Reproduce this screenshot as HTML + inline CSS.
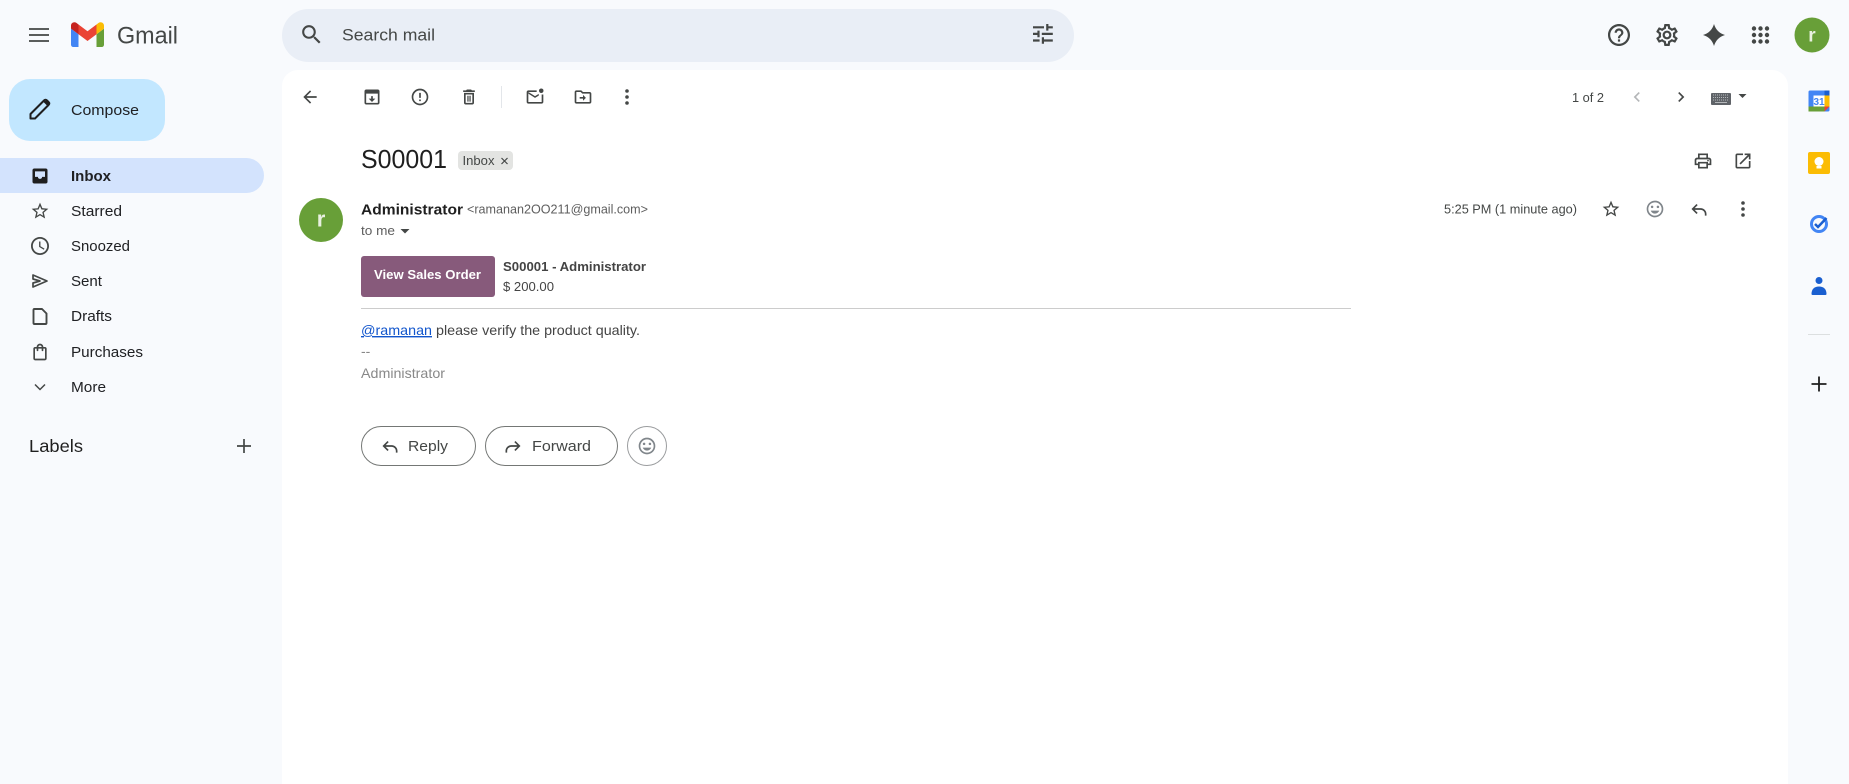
<!DOCTYPE html>
<html lang="en">
<head>
<meta charset="utf-8">
<title>S00001 - Gmail</title>
<style>
html,body{margin:0;padding:0;width:1849px;height:784px;overflow:hidden;background:#f8fafd}
svg{display:block}
text{font-family:"Liberation Sans",Arial,sans-serif;fill:#1f1f1f;white-space:pre}
.n{font-size:15px;fill:#202124}
.i{fill:#444746}
.s{font-size:13px;fill:#5e5e5e}
.m{font-size:14px;fill:#444}
</style>
</head>
<body>
<svg width="1849" height="784" viewBox="0 0 1849 784" xmlns="http://www.w3.org/2000/svg">
<rect width="1849" height="784" fill="#f8fafd"/>
<!-- main panel -->
<path d="M298 70H1772a16 16 0 0 1 16 16V784H282V86a16 16 0 0 1 16-16z" fill="#fff"/>
<!-- search -->
<rect x="282" y="9" width="792" height="53" rx="26.5" fill="#e9eef6"/>
<!-- top left -->
<path d="M29 29h20M29 35h20M29 41h20" stroke="#444746" stroke-width="1.8" fill="none"/>
<g transform="translate(71,23) scale(.375)">
<path fill="#4285f4" d="M6 64h14V30L0 15v43c0 3.32 2.69 6 6 6"/>
<path fill="#689f38" d="M68 64h14c3.32 0 6-2.69 6-6V15L68 30"/>
<path fill="#fbbc04" d="M68 4v26l20-15V7c0-7.42-8.47-11.65-14.4-7.2"/>
<path fill="#ea4335" d="M20 30V4l24 18 24-18v26L44 48"/>
<path fill="#c5221f" d="M0 7v8l20 15V4L14.4-.2C8.46-4.65 0-.42 0 7"/>
</g>
<text x="117" y="43.500" font-size="24" textLength="61" lengthAdjust="spacingAndGlyphs" style="fill:#444746">Gmail</text>
<!-- search contents -->
<g transform="translate(299,22) scale(1.05)" class="i"><path d="M15.5 14h-.79l-.28-.27C15.41 12.59 16 11.11 16 9.5 16 5.91 13.09 3 9.5 3S3 5.91 3 9.5 5.91 16 9.5 16c1.61 0 3.09-.59 4.23-1.57l.27.28v.79l5 4.99L20.49 19l-4.99-5zm-6 0C7.01 14 5 11.99 5 9.5S7.01 5 9.5 5 14 7.01 14 9.5 11.99 14 9.5 14z"/></g>
<text x="342" y="40.500" font-size="17" textLength="93" lengthAdjust="spacingAndGlyphs" style="fill:#444746">Search mail</text>
<g transform="translate(1029.700,20.700) scale(1.1)" class="i"><path d="M3 17v2h6v-2H3zM3 5v2h10V5H3zm10 16v-2h8v-2h-8v-2h-2v6h2zM7 9v2H3v2h4v2h2V9H7zm14 4v-2H11v2h10zm-6-4h2V7h4V5h-4V3h-2v6z"/></g>
<!-- top right -->
<g transform="translate(1605.800,21.800) scale(1.1)" class="i"><path d="M11 18h2v-2h-2v2zm1-16C6.48 2 2 6.48 2 12s4.48 10 10 10 10-4.48 10-10S17.52 2 12 2zm0 18c-4.41 0-8-3.59-8-8s3.59-8 8-8 8 3.58 8 8-3.59 8-8 8zm0-14c-2.21 0-4 1.79-4 4h2c0-1.1.9-2 2-2s2 .9 2 2c0 2-3 1.75-3 5h2c0-2.25 3-2.5 3-5 0-2.21-1.79-4-4-4z"/></g>
<g transform="translate(1653.800,21.800) scale(1.1)" class="i"><path d="M19.43 12.98c.04-.32.07-.64.07-.98 0-.34-.03-.66-.07-.98l2.11-1.65c.19-.15.24-.42.12-.64l-2-3.46c-.09-.16-.26-.25-.44-.25-.06 0-.12.01-.17.03l-2.49 1c-.52-.4-1.08-.73-1.69-.98l-.38-2.65C14.46 2.18 14.25 2 14 2h-4c-.25 0-.46.18-.49.42l-.38 2.65c-.61.25-1.17.59-1.69.98l-2.49-1c-.06-.02-.12-.03-.18-.03-.17 0-.34.09-.43.25l-2 3.46c-.13.22-.07.49.12.64l2.11 1.65c-.04.32-.07.65-.07.98 0 .33.03.66.07.98l-2.11 1.65c-.19.15-.24.42-.12.64l2 3.46c.09.16.26.25.44.25.06 0 .12-.01.17-.03l2.49-1c.52.4 1.08.73 1.69.98l.38 2.65c.03.24.24.42.49.42h4c.25 0 .46-.18.49-.42l.38-2.65c.61-.25 1.17-.59 1.69-.98l2.49 1c.06.02.12.03.18.03.17 0 .34-.09.43-.25l2-3.46c.12-.22.07-.49-.12-.64l-2.11-1.65zm-1.98-1.71c.04.31.05.52.05.73 0 .21-.02.43-.05.73l-.14 1.13.89.7 1.08.84-.7 1.21-1.27-.51-1.04-.42-.9.68c-.43.32-.84.56-1.25.73l-1.06.43-.16 1.13-.2 1.35h-1.4l-.19-1.35-.16-1.13-1.06-.43c-.43-.18-.83-.41-1.23-.71l-.91-.7-1.06.43-1.27.51-.7-1.21 1.08-.84.89-.7-.14-1.13c-.03-.31-.05-.54-.05-.74s.02-.43.05-.73l.14-1.13-.89-.7-1.08-.84.7-1.21 1.27.51 1.04.42.9-.68c.43-.32.84-.56 1.25-.73l1.06-.43.16-1.13.2-1.35h1.39l.19 1.35.16 1.13 1.06.43c.43.18.83.41 1.23.71l.91.7 1.06-.43 1.27-.51.7 1.21-1.07.85-.89.7.14 1.13zM12 8c-2.21 0-4 1.79-4 4s1.79 4 4 4 4-1.79 4-4-1.79-4-4-4zm0 6c-1.1 0-2-.9-2-2s.9-2 2-2 2 .9 2 2-.9 2-2 2z"/></g>
<path class="i" d="M1714 24Q1716.500 32.500 1725 35Q1716.500 37.500 1714 46Q1711.500 37.500 1703 35Q1711.500 32.500 1714 24z"/>
<g class="i">
<circle cx="1754" cy="28.500" r="2.200"/><circle cx="1760.500" cy="28.500" r="2.200"/><circle cx="1767" cy="28.500" r="2.200"/>
<circle cx="1754" cy="35" r="2.200"/><circle cx="1760.500" cy="35" r="2.200"/><circle cx="1767" cy="35" r="2.200"/>
<circle cx="1754" cy="41.500" r="2.200"/><circle cx="1760.500" cy="41.500" r="2.200"/><circle cx="1767" cy="41.500" r="2.200"/>
</g>
<circle cx="1812" cy="35" r="17.500" fill="#689f38"/>
<text x="1812" y="41.500" font-size="19" font-weight="700" text-anchor="middle" style="fill:#e8f0e0">r</text>
<!-- compose -->
<rect x="9" y="79" width="156" height="62" rx="21" fill="#c2e7ff"/>
<path d="M30.500 118.500V114L44 100.500q1.500-1.500 3 0l1.500 1.500q1.500 1.500 0 3L35 118.500z" fill="none" stroke="#1f1f1f" stroke-width="2" stroke-linejoin="round"/>
<path d="M43 101.500l5 5 1.200-2.500-3-3.500z" fill="#1f1f1f"/>
<text x="71" y="115" class="n" textLength="68" lengthAdjust="spacingAndGlyphs">Compose</text>
<!-- nav -->
<path d="M0 158H246.500a17.500 17.500 0 0 1 0 35H0z" fill="#d3e3fd"/>
<g transform="translate(30,166) scale(.8333)" fill="#1f1f1f"><path d="M19 3H5c-1.100 0-2 .9-2 2v14c0 1.100.9 2 2 2h14c1.100 0 2-.9 2-2V5c0-1.100-.9-2-2-2z"/><path fill="#d3e3fd" d="M6 6.500h12v6.500h-3.500c0 1.400-1.100 2.500-2.500 2.500s-2.500-1.100-2.500-2.500H6z"/></g>
<text x="71" y="181" class="n" font-weight="700" textLength="40" lengthAdjust="spacingAndGlyphs">Inbox</text>
<g transform="translate(30,201) scale(.8333)" class="i"><path d="M22 9.240l-7.190-.62L12 2 9.190 8.630 2 9.240l5.460 4.730L5.820 21 12 17.270 18.180 21l-1.630-7.030L22 9.240zM12 15.400l-3.760 2.270 1-4.280-3.320-2.880 4.380-.38L12 6.100l1.710 4.040 4.380.38-3.320 2.880 1 4.280L12 15.400z"/></g>
<text x="71" y="216" class="n" textLength="51" lengthAdjust="spacingAndGlyphs">Starred</text>
<g transform="translate(29.200,235.200) scale(.9)" class="i"><path d="M11.990 2C6.470 2 2 6.480 2 12s4.470 10 9.990 10C17.520 22 22 17.520 22 12S17.520 2 11.990 2zM12 20c-4.420 0-8-3.580-8-8s3.580-8 8-8 8 3.580 8 8-3.580 8-8 8zm.5-13H11v6l5.250 3.150.75-1.230-4.500-2.670z"/></g>
<text x="71" y="251" class="n" textLength="59" lengthAdjust="spacingAndGlyphs">Snoozed</text>
<path d="M33 275L47 281L33 287V283L40 281L33 279z" fill="none" stroke="#444746" stroke-width="1.700" stroke-linejoin="round"/>
<text x="71" y="286" class="n" textLength="31" lengthAdjust="spacingAndGlyphs">Sent</text>
<path d="M34.500 309h7.500l4.500 4.500V323a1 1 0 0 1-1 1h-11a1 1 0 0 1-1-1V310a1 1 0 0 1 1-1z" fill="none" stroke="#444746" stroke-width="1.900" stroke-linejoin="round"/>
<text x="71" y="321" class="n" textLength="41" lengthAdjust="spacingAndGlyphs">Drafts</text>
<g transform="translate(30,342) scale(.8333)" class="i"><path d="M18 6h-2c0-2.210-1.790-4-4-4S8 3.790 8 6H6c-1.100 0-2 .9-2 2v12c0 1.100.9 2 2 2h12c1.100 0 2-.9 2-2V8c0-1.100-.9-2-2-2zm-6-2c1.100 0 2 .9 2 2h-4c0-1.100.9-2 2-2zm6 16H6V8h2v2c0 .55.45 1 1 1s1-.45 1-1V8h4v2c0 .55.45 1 1 1s1-.45 1-1V8h2v12z"/></g>
<text x="71" y="357" class="n" textLength="72" lengthAdjust="spacingAndGlyphs">Purchases</text>
<path d="M35 384.500l5 5 5-5" fill="none" stroke="#444746" stroke-width="1.500"/>
<text x="71" y="392" class="n" textLength="35" lengthAdjust="spacingAndGlyphs">More</text>
<text x="29" y="452" font-size="17.500" textLength="54" lengthAdjust="spacingAndGlyphs">Labels</text>
<path d="M237 446h14M244 439v14" stroke="#444746" stroke-width="1.700"/>
<!-- toolbar -->
<g transform="translate(300,87) scale(.8333)" class="i"><path d="M20 11H7.830l5.590-5.590L12 4l-8 8 8 8 1.410-1.410L7.830 13H20v-2z"/></g>
<g transform="translate(362,87) scale(.8333)" class="i"><path d="M19 3H5c-1.100 0-2 .9-2 2v14c0 1.100.9 2 2 2h14c1.100 0 2-.9 2-2V5c0-1.100-.9-2-2-2zm0 16H5V8h14v11zM12 18l4-4h-3v-3h-2v3H8l4 4z"/></g>
<g transform="translate(410,87) scale(.8333)" class="i"><path d="M11 15h2v2h-2zm0-8h2v6h-2zm.99-5C6.470 2 2 6.480 2 12s4.470 10 9.990 10C17.520 22 22 17.520 22 12S17.520 2 11.990 2zM12 20c-4.420 0-8-3.580-8-8s3.580-8 8-8 8 3.580 8 8-3.580 8-8 8z"/></g>
<g transform="translate(459,87) scale(.8333)" class="i"><path d="M6 19c0 1.100.9 2 2 2h8c1.100 0 2-.9 2-2V7H6v12zM8 9h8v10H8V9zm7.500-5l-1-1h-5l-1 1H5v2h14V4h-3.500z"/><path d="M10 10.500h1.500v7H10zM12.500 10.500H14v7h-1.500z"/></g>
<rect x="501" y="86" width="1" height="22" fill="#e3e6ea"/>
<g transform="translate(525,87) scale(.8333)" class="i"><path d="M20 20H4c-1.100 0-2-.9-2-2V6c0-1.100.9-2 2-2h10v2H4v12h16V9h2v9c0 1.100-.9 2-2 2z"/><path d="M4 6l8 5 4.500-2.800v2.200L12 13 4 8z"/><circle cx="19.500" cy="4.500" r="2.700"/></g>
<g transform="translate(573,87) scale(.8333)" class="i"><path d="M20 6h-8l-2-2H4c-1.100 0-2 .9-2 2v12c0 1.100.9 2 2 2h16c1.100 0 2-.9 2-2V8c0-1.100-.9-2-2-2zm0 12H4V6h5.170l2 2H20v10z"/><path d="M12 14H8v-2h4V9.500l3.500 3.500-3.500 3.500z"/></g>
<g class="i"><circle cx="627" cy="91" r="1.800"/><circle cx="627" cy="97" r="1.800"/><circle cx="627" cy="103" r="1.800"/></g>
<text x="1572" y="102" font-size="13" textLength="32" lengthAdjust="spacingAndGlyphs" style="fill:#444746">1 of 2</text>
<g transform="translate(1627,87) scale(.8333)" fill="#b4b6b8"><path d="M15.410 7.410L14 6l-6 6 6 6 1.410-1.410L10.830 12z"/></g>
<g transform="translate(1671,87) scale(.8333)" class="i"><path d="M10 6L8.590 7.410 13.170 12l-4.580 4.590L10 18l6-6z"/></g>
<rect x="1711" y="93" width="20" height="12" rx="1" fill="#5f6368"/>
<path d="M1713 95h16M1713 97.500h16M1713 100h16" stroke="#b5b8bb" stroke-width="1" stroke-dasharray="1 1"/>
<rect x="1715" y="102" width="12" height="1" fill="#b5b8bb"/>
<path class="i" d="M1738.500 94h8l-4 4z"/>
<!-- subject -->
<text x="361" y="168" font-size="26" textLength="86" lengthAdjust="spacingAndGlyphs">S00001</text>
<rect x="458" y="151" width="55" height="19" rx="4" fill="#e3e4e2"/>
<text x="462.500" y="165" font-size="13" textLength="32" lengthAdjust="spacingAndGlyphs" style="fill:#444746">Inbox</text>
<path d="M501.500 158l6 6M507.500 158l-6 6" stroke="#444746" stroke-width="1.200"/>
<g transform="translate(1693,151) scale(.8333)" class="i"><path d="M19 8h-1V3H6v5H5c-1.660 0-3 1.340-3 3v6h4v4h12v-4h4v-6c0-1.660-1.340-3-3-3zM8 5h8v3H8V5zm8 12v2H8v-4h8v2zm2-2v-2H6v2H4v-4c0-.55.45-1 1-1h14c.55 0 1 .45 1 1v4h-2z"/><circle cx="18" cy="11.500" r="1"/></g>
<g transform="translate(1733,151) scale(.8333)" class="i"><path d="M19 19H5V5h7V3H5c-1.110 0-2 .9-2 2v14c0 1.100.89 2 2 2h14c1.100 0 2-.9 2-2v-7h-2v7zM14 3v2h3.590l-9.830 9.830 1.410 1.410L19 6.410V10h2V3h-7z"/></g>
<!-- message header -->
<circle cx="321" cy="220" r="22" fill="#689f38"/>
<text x="321" y="226.500" font-size="22" font-weight="700" text-anchor="middle" style="fill:#e8f0e0">r</text>
<text x="361" y="214.500" font-size="15" font-weight="700" textLength="102" lengthAdjust="spacingAndGlyphs">Administrator</text>
<text x="467" y="213.500" class="s" textLength="181" lengthAdjust="spacingAndGlyphs">&lt;ramanan2OO211@gmail.com&gt;</text>
<text x="361" y="235" class="s" textLength="34" lengthAdjust="spacingAndGlyphs">to me</text>
<path class="i" d="M400.500 229h9l-4.500 4.500z"/>
<text x="1444" y="213.500" class="s" textLength="133" lengthAdjust="spacingAndGlyphs" style="fill:#444746">5:25 PM (1 minute ago)</text>
<g transform="translate(1601,199) scale(.8333)" class="i"><path d="M22 9.240l-7.190-.62L12 2 9.190 8.630 2 9.240l5.460 4.730L5.820 21 12 17.270 18.180 21l-1.630-7.030L22 9.240zM12 15.400l-3.760 2.270 1-4.280-3.320-2.880 4.380-.38L12 6.100l1.710 4.040 4.380.38-3.320 2.880 1 4.280L12 15.400z"/></g>
<g transform="translate(1645,199) scale(.8333)" fill="#80868b"><path d="M11.990 2C6.470 2 2 6.480 2 12s4.470 10 9.990 10C17.520 22 22 17.520 22 12S17.520 2 11.990 2zM12 20c-4.420 0-8-3.580-8-8s3.580-8 8-8 8 3.580 8 8-3.580 8-8 8z"/><circle cx="15.500" cy="9.500" r="1.500"/><circle cx="8.500" cy="9.500" r="1.500"/><path d="M12 17.500c2.330 0 4.310-1.460 5.110-3.500H6.890c.8 2.040 2.780 3.500 5.110 3.500z"/></g>
<g transform="translate(1689,199) scale(.8333)" class="i"><path d="M21 18v2h-2v-2c0-2.760-2.240-5-5-5H6.830l3.590 3.590L9 18l-6-6 6-6 1.410 1.410L6.830 11H14c3.870 0 7 3.130 7 7z"/></g>
<g class="i"><circle cx="1743" cy="203" r="1.800"/><circle cx="1743" cy="209" r="1.800"/><circle cx="1743" cy="215" r="1.800"/></g>
<!-- body -->
<rect x="361" y="256" width="134" height="41" rx="3" fill="#875a7b"/>
<text x="374" y="279" font-size="13" font-weight="700" textLength="107" lengthAdjust="spacingAndGlyphs" style="fill:#fff">View Sales Order</text>
<text x="503" y="271" font-size="13" font-weight="700" textLength="143" lengthAdjust="spacingAndGlyphs" style="fill:#444">S00001 - Administrator</text>
<text x="503" y="291" font-size="13" textLength="51" lengthAdjust="spacingAndGlyphs" style="fill:#444">$ 200.00</text>
<rect x="361" y="308" width="990" height="1" fill="#ccc"/>
<text x="361" y="335" font-size="14" textLength="71" lengthAdjust="spacingAndGlyphs" text-decoration="underline" style="fill:#15c">@ramanan</text>
<text x="436" y="335" class="m" textLength="204" lengthAdjust="spacingAndGlyphs">please verify the product quality.</text>
<text x="361" y="356" font-size="14" style="fill:#888">--</text>
<text x="361" y="378" font-size="14" textLength="84" lengthAdjust="spacingAndGlyphs" style="fill:#888">Administrator</text>
<!-- reply buttons -->
<rect x="361.500" y="426.500" width="114" height="39" rx="19.500" fill="#fff" stroke="#747775"/>
<g transform="translate(380,436) scale(.8333)" class="i"><path d="M21 18v2h-2v-2c0-2.760-2.240-5-5-5H6.830l3.590 3.590L9 18l-6-6 6-6 1.410 1.410L6.830 11H14c3.870 0 7 3.130 7 7z"/></g>
<text x="408" y="451" font-size="15" textLength="40" lengthAdjust="spacingAndGlyphs" style="fill:#444746">Reply</text>
<rect x="485.500" y="426.500" width="132" height="39" rx="19.500" fill="#fff" stroke="#747775"/>
<g transform="translate(503,436) scale(.8333)" class="i"><path d="M3 18v2h2v-2c0-2.760 2.240-5 5-5h7.170l-3.590 3.590L15 18l6-6-6-6-1.410 1.410L17.170 11H10c-3.870 0-7 3.130-7 7z"/></g>
<text x="532" y="451" font-size="15" textLength="59" lengthAdjust="spacingAndGlyphs" style="fill:#444746">Forward</text>
<circle cx="647" cy="446" r="19.500" fill="#fff" stroke="#9a9c9e"/>
<g transform="translate(637,436) scale(.8333)" fill="#80868b"><path d="M11.990 2C6.470 2 2 6.480 2 12s4.470 10 9.990 10C17.520 22 22 17.520 22 12S17.520 2 11.990 2zM12 20c-4.420 0-8-3.580-8-8s3.580-8 8-8 8 3.580 8 8-3.580 8-8 8z"/><circle cx="15.500" cy="9.500" r="1.500"/><circle cx="8.500" cy="9.500" r="1.500"/><path d="M12 17.500c2.330 0 4.310-1.460 5.110-3.500H6.890c.8 2.040 2.780 3.500 5.110 3.500z"/></g>
<!-- side panel -->
<rect x="1808.500" y="90.500" width="21" height="21" rx="1.500" fill="#4285f4"/>
<rect x="1824" y="95" width="5.500" height="12" fill="#fbbc04"/>
<rect x="1808.500" y="106.500" width="16" height="5" fill="#689f38"/>
<path d="M1824.500 106.500h5l-5 5z" fill="#ea4335"/>
<path d="M1824.500 90.500h5v5h-5z" fill="#1a5fd0"/>
<rect x="1813.500" y="95.500" width="11" height="11" fill="#fff"/>
<text x="1819" y="105" font-size="10" font-weight="700" text-anchor="middle" style="fill:#4285f4">31</text>
<rect x="1808" y="152" width="22" height="22" rx="2" fill="#fbbc04"/>
<circle cx="1819" cy="161.500" r="4.500" fill="#fff"/>
<rect x="1816.500" y="166" width="5" height="2.500" fill="#fff"/>
<circle cx="1819" cy="224" r="7.500" fill="none" stroke="#4285f4" stroke-width="3"/>
<path d="M1815 224l3 3 8.500-9" fill="none" stroke="#1a5fd0" stroke-width="2.500"/>
<circle cx="1819" cy="280.500" r="3.500" fill="#1a5fd0"/>
<path d="M1811.500 294c0-5 3-7.500 7.500-7.500s7.500 2.500 7.500 7.500c0 .6-.5 1-1 1h-13c-.5 0-1-.4-1-1z" fill="#1a5fd0"/>
<rect x="1808" y="334" width="22" height="1" fill="#dcdfe0"/>
<path d="M1811.500 384h15M1819 376.500v15" stroke="#1f1f1f" stroke-width="1.800"/>
</svg>
</body>
</html>
